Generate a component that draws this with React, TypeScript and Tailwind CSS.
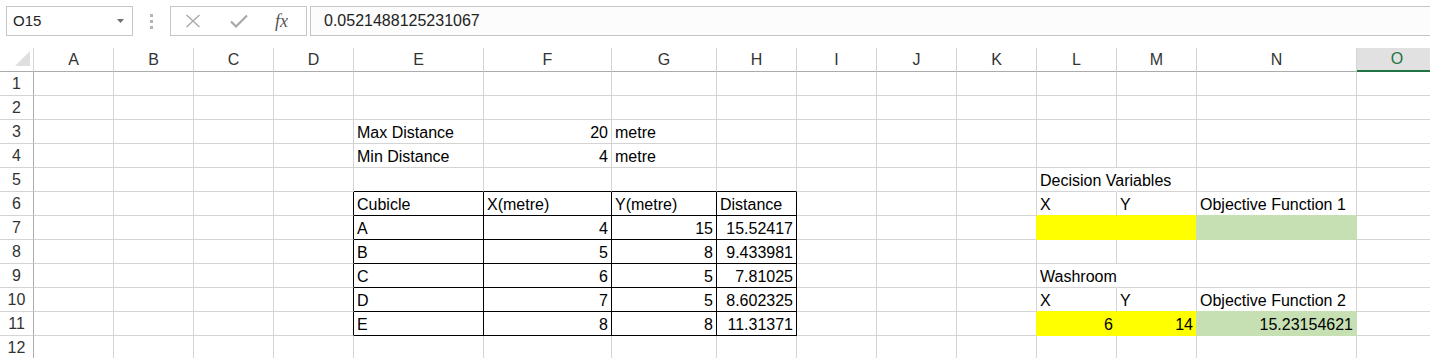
import React from "react";

const COLUMNS = ["A", "B", "C", "D", "E", "F", "G", "H", "I", "J", "K", "L", "M", "N", "O"];
const ROWS = [1, 2, 3, 4, 5, 6, 7, 8, 9, 10, 11, 12];

type Cell = { v: string; right?: boolean };

const CELLS: Record<string, Cell> = {
  "3-4": { v: "Max Distance" },
  "3-5": { v: "20", right: true },
  "3-6": { v: "metre" },
  "4-4": { v: "Min Distance" },
  "4-5": { v: "4", right: true },
  "4-6": { v: "metre" },
  "5-11": { v: "Decision Variables" },
  "6-4": { v: "Cubicle" },
  "6-5": { v: "X(metre)" },
  "6-6": { v: "Y(metre)" },
  "6-7": { v: "Distance" },
  "6-11": { v: "X" },
  "6-12": { v: "Y" },
  "6-13": { v: "Objective Function 1" },
  "9-11": { v: "Washroom" },
  "10-11": { v: "X" },
  "10-12": { v: "Y" },
  "10-13": { v: "Objective Function 2" },
  "11-11": { v: "6", right: true },
  "11-12": { v: "14", right: true },
  "11-13": { v: "15.23154621", right: true },
};

// cubicle table, rows 7-11
const cubicles = [
  ["A", "4", "15", "15.52417"],
  ["B", "5", "8", "9.433981"],
  ["C", "6", "5", "7.81025"],
  ["D", "7", "5", "8.602325"],
  ["E", "8", "8", "11.31371"],
];
cubicles.forEach((row, i) => {
  row.forEach((v, j) => {
    CELLS[`${7 + i}-${4 + j}`] = { v, right: j > 0 };
  });
});

const inTable = (r: number, c: number) => r >= 6 && r <= 11 && c >= 4 && c <= 7;

const fill = (r: number, c: number) => {
  if (r !== 7 && r !== 11) return null;
  if (c === 11 || c === 12) return "yellow";
  if (c === 13) return "green";
  return null;
};

const borderRight = (r: number, c: number) => {
  if (inTable(r, c) || inTable(r, c + 1)) return "border-r-black";
  const f = fill(r, c + 1) ?? fill(r, c);
  if (f === "yellow") return "border-r-[#ffff00]";
  if (f === "green") return "border-r-[#c6e0b4]";
  // text spills over from L into M
  if ((r === 5 || r === 9) && c === 11) return "border-r-transparent";
  return "border-r-[#d4d4d4]";
};

const borderBottom = (r: number, c: number) => {
  if (inTable(r, c) || inTable(r + 1, c)) return "border-b-black";
  const f = fill(r + 1, c) ?? fill(r, c);
  if (f === "yellow") return "border-b-[#ffff00]";
  if (f === "green") return "border-b-[#c6e0b4]";
  return "border-b-[#d4d4d4]";
};

const bgFor = (r: number, c: number) => {
  const f = fill(r, c);
  if (f === "yellow") return "bg-[#ffff00]";
  if (f === "green") return "bg-[#c6e0b4]";
  return "";
};

function FormulaBar() {
  return (
    <div className="flex h-[48px] items-start bg-white pt-[6px]">
      <div className="ml-[6px] flex h-[30px] w-[127px] shrink-0 items-center justify-between border border-[#c6c6c6] bg-white pl-[6px] pr-[8px] text-[15px] text-[#222]">
        <span>O15</span>
        <svg width="7" height="4" viewBox="0 0 7 4">
          <polygon points="0,0 7,0 3.5,4" fill="#6f6f6f" />
        </svg>
      </div>
      <div className="flex h-[30px] w-[37px] shrink-0 flex-col items-center justify-center gap-[3px]">
        <span className="h-[3px] w-[3px] bg-[#b4b4b4]" />
        <span className="h-[3px] w-[3px] bg-[#b4b4b4]" />
        <span className="h-[3px] w-[3px] bg-[#b4b4b4]" />
      </div>
      <div className="flex h-[30px] w-[137px] shrink-0 items-center border border-[#c6c6c6] bg-white">
        <svg className="ml-[14px]" width="16" height="14" viewBox="0 0 16 14">
          <path d="M1.5 1 L14.5 13 M14.5 1 L1.5 13" stroke="#a8a8a8" strokeWidth="1.3" fill="none" />
        </svg>
        <svg className="ml-[29px]" width="18" height="14" viewBox="0 0 18 14">
          <path d="M1 7.5 L6 12.5 L17 1.5" stroke="#a8a8a8" strokeWidth="2.2" fill="none" />
        </svg>
        <span className="ml-[27px] font-['Liberation_Serif',serif] text-[18px] italic leading-none text-[#555]">
          fx
        </span>
      </div>
      <div className="ml-[3px] flex h-[30px] w-[1200px] shrink-0 items-center border border-[#c6c6c6] bg-[#fcfcfc] pl-[13px] text-[16px] text-[#222]">
        0.0521488125231067
      </div>
    </div>
  );
}

export default function App() {
  return (
    <div className="h-[358px] w-[1430px] overflow-hidden bg-white font-['Liberation_Sans',Arial,sans-serif] text-[16px] text-black">
      <FormulaBar />
      <div className="grid auto-rows-[24px] grid-cols-[34px_80px_80px_80px_80px_130px_128px_105px_80px_80px_80px_80px_80px_80px_160px_80px]">
        {/* column headers */}
        <div className="relative border-r border-b border-r-[#d4d4d4] border-b-[#ababab]">
          <svg className="absolute left-0 top-0" width="33" height="23" viewBox="0 0 33 23">
            <polygon points="15,18 30,18 30,3" fill="#dfdfdf" />
          </svg>
        </div>
        {COLUMNS.map((col, c) =>
          c === 14 ? (
            <div
              key={col}
              className="flex items-center justify-center border-b-2 border-b-[#217346] bg-[#e1e1e1] leading-[20px] text-[#217346]"
            >
              {col}
            </div>
          ) : (
            <div
              key={col}
              className="flex items-center justify-center border-r border-b border-r-[#d4d4d4] border-b-[#ababab] leading-[20px] text-[#333]"
            >
              {col}
            </div>
          ),
        )}

        {ROWS.map((r) => (
          <React.Fragment key={r}>
            <div className="flex items-center justify-center border-r border-b border-r-[#ababab] border-b-[#d4d4d4] leading-[20px] text-[#333]">
              {r}
            </div>
            {COLUMNS.map((col, c) => {
              const cell = CELLS[`${r}-${c}`];
              return (
                <div
                  key={col}
                  className={`flex items-end whitespace-nowrap border-r border-b px-[3px] leading-[20px] ${borderRight(r, c)} ${borderBottom(r, c)} ${bgFor(r, c)} ${
                    cell?.right ? "justify-end" : "justify-start"
                  }`}
                >
                  {cell?.v}
                </div>
              );
            })}
          </React.Fragment>
        ))}
      </div>
    </div>
  );
}
